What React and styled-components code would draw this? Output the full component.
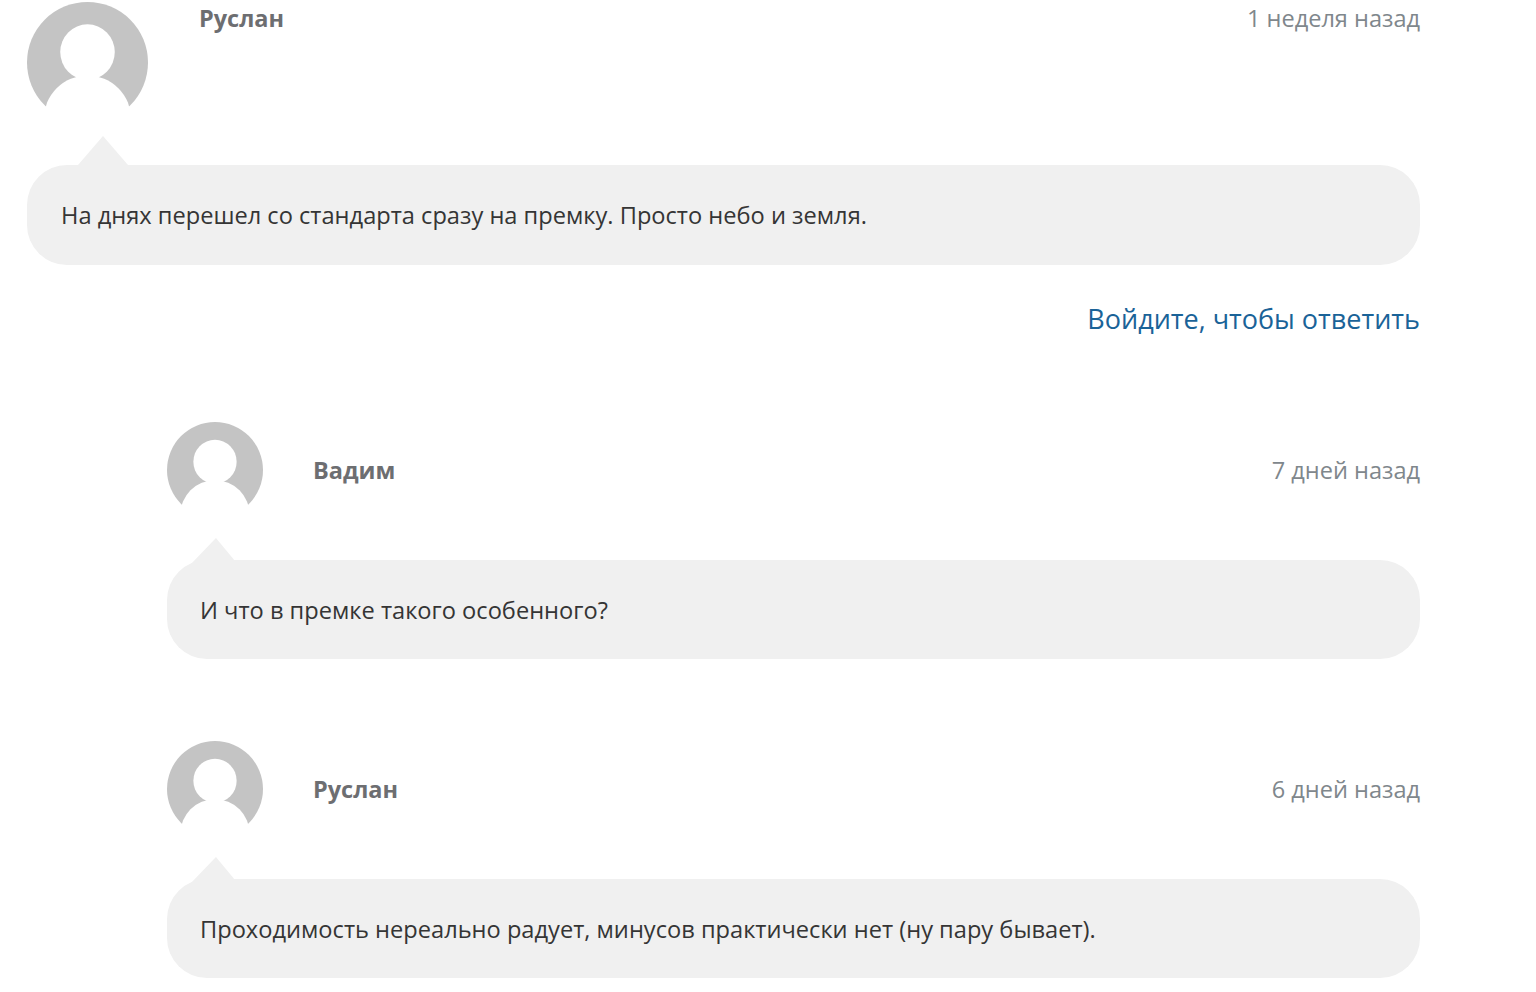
import React from 'react'
import styled, { createGlobalStyle } from 'styled-components';

const GlobalStyle = createGlobalStyle`
  html, body {
    margin: 0;
    padding: 0;
    background: #fff;
    overflow: hidden;
  }
  body {
    font-family: "Open Sans", "Noto Sans", sans-serif;
  }
`;

const Page = styled.div`
  width: 1420px;
  height: 992px;
  padding: 2px 0 0 27px;
  box-sizing: border-box;
  display: flex;
  flex-direction: column;
`;

const Comment = styled.div`
  margin-left: ${p => (p.$nested ? '140px' : '0')};
  margin-top: ${p => p.$gap || 0}px;
`;

const Header = styled.div`
  display: flex;
  justify-content: space-between;
  align-items: ${p => (p.$nested ? 'center' : 'flex-start')};
  margin-bottom: 42px;
`;

const Author = styled.div`
  display: flex;
  align-items: ${p => (p.$nested ? 'center' : 'flex-start')};
  gap: ${p => (p.$nested ? '50px' : '51px')};
`;

const Name = styled.span`
  font-size: 23.5px;
  line-height: 32px;
  font-weight: 700;
  color: #6d6e71;
`;

const Time = styled.span`
  font-size: 23.55px;
  line-height: 32px;
  color: #7f878c;
`;

const Bubble = styled.div`
  position: relative;
  height: ${p => (p.$nested ? '99px' : '100px')};
  display: flex;
  align-items: center;
  padding: 0 ${p => (p.$nested ? '33px' : '34px')};
  background: #f0f0f0;
  border-radius: 40px;
  font-size: 23.63px;
  color: #353535;

  &::before {
    content: '';
    position: absolute;
    top: ${p => (p.$nested ? '-22px' : '-29px')};
    left: ${p => (p.$nested ? '23px' : '51px')};
    width: ${p => (p.$nested ? '44px' : '50px')};
    height: ${p => (p.$nested ? '27px' : '29px')};
    background: #f0f0f0;
    clip-path: ${p => (p.$nested
      ? 'polygon(59% 0, 100% 81%, 100% 100%, 0 100%)'
      : 'polygon(50% 0, 100% 100%, 0 100%)')};
  }
`;

const Reply = styled.a`
  align-self: flex-end;
  margin-top: 34px;
  font-size: 27px;
  line-height: 40px;
  color: #1a6398;
  text-decoration: none;
`;

const Avatar = ({ size }) => (
  <svg width={size} height={size} viewBox="0 0 122 122" style={{ flexShrink: 0, display: 'block' }}>
    <circle cx="61" cy="61" r="61" fill="#c4c4c4" />
    <ellipse cx="61" cy="50.5" rx="27.5" ry="28" fill="#fff" />
    <circle cx="61" cy="118" r="44" fill="#fff" />
  </svg>
);

const App = () => {
  return (
    <Page>
      <GlobalStyle />
      <Comment>
        <Header>
          <Author>
            <Avatar size={121} />
            <Name>Руслан</Name>
          </Author>
          <Time>1 неделя назад</Time>
        </Header>
        <Bubble>На днях перешел со стандарта сразу на премку. Просто небо и земля.</Bubble>
      </Comment>
      <Reply href="#">Войдите, чтобы ответить</Reply>
      <Comment $nested $gap={83}>
        <Header $nested>
          <Author $nested>
            <Avatar size={96} />
            <Name>Вадим</Name>
          </Author>
          <Time>7 дней назад</Time>
        </Header>
        <Bubble $nested>И что в премке такого особенного?</Bubble>
      </Comment>
      <Comment $nested $gap={82}>
        <Header $nested>
          <Author $nested>
            <Avatar size={96} />
            <Name>Руслан</Name>
          </Author>
          <Time>6 дней назад</Time>
        </Header>
        <Bubble $nested>Проходимость нереально радует, минусов практически нет (ну пару бывает).</Bubble>
      </Comment>
    </Page>
  );
}

export default App;
